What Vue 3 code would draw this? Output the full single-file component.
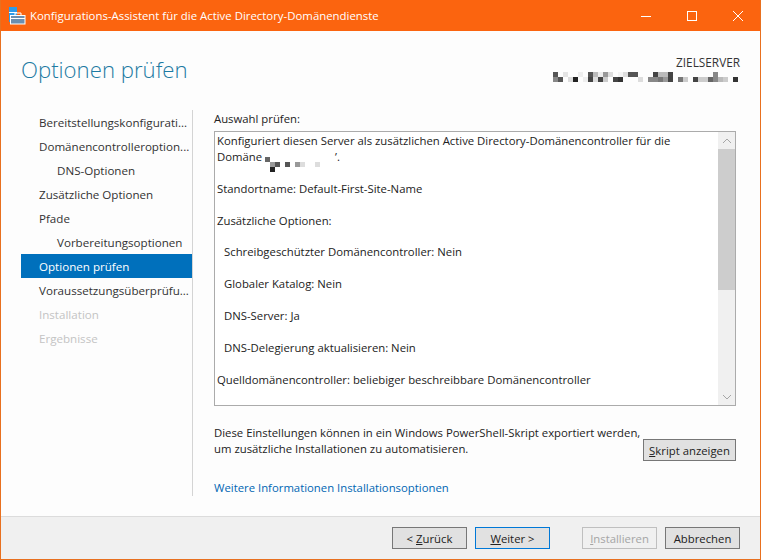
<script setup>
const navItems = [
  { label: 'Bereitstellungskonfigurati...', },
  { label: 'Domänencontrolleroption...' },
  { label: 'DNS-Optionen', sub: true },
  { label: 'Zusätzliche Optionen' },
  { label: 'Pfade' },
  { label: 'Vorbereitungsoptionen', sub: true },
  { label: 'Optionen prüfen', active: true },
  { label: 'Voraussetzungsüberprüfu...' },
  { label: 'Installation', disabled: true },
  { label: 'Ergebnisse', disabled: true }
]
const lines = [
  { t: 'Standortname: Default-First-Site-Name' },
  { t: 'Zusätzliche Optionen:' },
  { t: 'Schreibgeschützter Domänencontroller: Nein', ind: true },
  { t: 'Globaler Katalog: Nein', ind: true },
  { t: 'DNS-Server: Ja', ind: true },
  { t: 'DNS-Delegierung aktualisieren: Nein', ind: true },
  { t: 'Quelldomänencontroller: beliebiger beschreibbare Domänencontroller' }
]
const w = 'transparent'
const top = ['#555',w,'#e4e4e4',w,w,'#eee',w,'#555','#bbb','#eee','#999','#ddd',w,'#f4f4f4','#ddd','#555','#555',w,w,w,'#444','#bbb','#bbb','#444',w,w,w,w,w,w,w,w,'#888',w,w,w,w]
const bottom = ['#888','#555',w,'#ddd','#222',w,'#eee','#444','#ddd','#444','#ccc',w,'#444','#333',w,w,w,'#ddd',w,'#888','#888','#777','#999','#444',w,'#777','#ccc',w,'#444','#ccc','#ccc','#666','#888','#bbb','#ccc',w,'#333']
const domainCells = [
  { c: 1, r: 1, bg: '#666' },
  { c: 2, r: 2, bg: '#999' },
  { c: 3, r: 2, bg: '#555' },
  { c: 2, r: 3, bg: '#222' },
  { c: 5, r: 2, bg: '#555' },
  { c: 7, r: 2, bg: '#999' },
  { c: 8, r: 2, bg: '#ddd' },
  { c: 11, r: 2, bg: '#ddd' }
]
</script>

<template>
  <div class="win">
    <header class="titlebar">
      <svg class="appicon" width="18" height="18" viewBox="0 0 18 18">
        <rect x="1" y="0" width="8" height="15" fill="#2f9be8"/>
        <rect x="1" y="5" width="8" height="1" fill="#fff"/>
        <rect x="2.5" y="8.5" width="14.5" height="8.5" fill="#6b8fb0" stroke="#fff"/>
        <path d="M7 8V6h6v2" fill="none" stroke="#fff"/>
        <rect x="3" y="11" width="14" height="1" fill="#fff"/>
      </svg>
      <span class="wintitle">Konfigurations-Assistent für die Active Directory-Domänendienste</span>
      <div class="controls">
        <svg width="10" height="10" viewBox="0 0 10 10"><path d="M0 5.5h10" stroke="#fff"/></svg>
        <svg width="10" height="10" viewBox="0 0 10 10"><rect x="0.5" y="0.5" width="9" height="9" fill="none" stroke="#fff"/></svg>
        <svg width="10" height="10" viewBox="0 0 10 10"><path d="M0 0l10 10M10 0L0 10" stroke="#fff"/></svg>
      </div>
    </header>

    <main class="client">
      <div class="headrow">
        <h1>Optionen prüfen</h1>
        <div class="target">
          <div class="tlabel">ZIELSERVER</div>
          <div class="mosaic">
            <div class="mrow"><i v-for="(c,i) in top" :key="i" :style="{background:c}"></i></div>
            <div class="mrow"><i v-for="(c,i) in bottom" :key="i" :style="{background:c}"></i></div>
          </div>
        </div>
      </div>

      <div class="content">
        <nav class="nav">
          <div v-for="n in navItems" :key="n.label" class="navitem" :class="{sub:n.sub,active:n.active,disabled:n.disabled}">{{ n.label }}</div>
        </nav>
        <section class="pane">
          <div class="plabel">Auswahl prüfen:</div>
          <div class="listbox">
            <div class="text">
              <div class="l">Konfiguriert diesen Server als zusätzlichen Active Directory-Domänencontroller für die</div>
              <div class="l">Domäne <span class="redact"><b v-for="(d,i) in domainCells" :key="i" :style="{gridColumn:d.c,gridRow:d.r,background:d.bg}"></b></span><span class="tail">’.</span></div>
              <template v-for="x in lines" :key="x.t">
                <div class="gap"></div>
                <div class="l" :class="{ind:x.ind}">{{ x.t }}</div>
              </template>
            </div>
            <div class="scroll">
              <div class="sbtn"><svg width="10" height="6" viewBox="0 0 10 6"><path d="M1 5l4-4 4 4" fill="none" stroke="#a6a6a6"/></svg></div>
              <div class="thumb"></div>
              <div class="strack"></div>
              <div class="sbtn"><svg width="10" height="6" viewBox="0 0 10 6"><path d="M1 1l4 4 4-4" fill="none" stroke="#a6a6a6"/></svg></div>
            </div>
          </div>
          <div class="exportrow">
            <div class="etext">Diese Einstellungen können in ein Windows PowerShell-Skript exportiert werden,<br>um zusätzliche Installationen zu automatisieren.</div>
            <button class="btn script"><u>S</u>kript anzeigen</button>
          </div>
          <a class="link">Weitere Informationen Installationsoptionen</a>
        </section>
      </div>
    </main>

    <footer class="footer">
      <button class="btn"><span>&lt; <u>Z</u>urück</span></button>
      <button class="btn focus"><span><u>W</u>eiter &gt;</span></button>
      <button class="btn dis"><u>I</u>nstallieren</button>
      <button class="btn">Abbrechen</button>
    </footer>
  </div>
</template>

<style>
html, body { margin: 0; background: #fff; }
</style>
<style scoped>
.win { width: 761px; height: 560px; box-sizing: border-box; border: 1px solid #e8701f; border-top: 0; display: flex; flex-direction: column; background: #fdfdfd; font-family: "Open Sans", "Noto Sans", sans-serif; font-size: 11.33px; color: #222; overflow: hidden; }
.titlebar { height: 31px; flex: none; background: #fb640f; color: #fff; display: flex; align-items: center; padding-left: 8px; margin: 0 -1px; }
.appicon { margin-right: 4px; margin-top: 1px; }
.wintitle { font-size: 11.4px; white-space: nowrap; }
.controls { margin-left: auto; display: flex; gap: 36px; margin-right: 18px; align-items: center; }
.client { flex: 1; display: flex; flex-direction: column; min-height: 0; }
.headrow { display: flex; justify-content: space-between; height: 74px; flex: none; }
h1 { margin: 21px 0 0 20px; font-size: 22.2px; line-height: 36px; font-weight: 300; color: #1e7ba3; font-family: "Open Sans", sans-serif; }
.target { margin: 22px 20px 0 0; text-align: right; }
.tlabel { font-size: 11.8px; line-height: 18px; color: #333; }
.mosaic { margin: 1px 2px 0 0; }
.mrow { display: flex; justify-content: flex-end; }
.mrow i { display: block; width: 5px; height: 5px; }
.content { flex: 1; display: flex; min-height: 0; padding-bottom: 20px; }
.nav { width: 171px; margin: 5px 0 0 20px; border-right: 1px solid #d4d4d4; flex: none; font-size: 11.6px; }
.navitem { height: 24px; line-height: 25px; padding-left: 18px; white-space: nowrap; color: #333; }
.navitem.sub { padding-left: 36px; }
.navitem.active { background: #0070bc; color: #fff; }
.navitem.disabled { color: #c4c4c4; }
.pane { flex: 1; padding: 6px 24px 0 21px; display: flex; flex-direction: column; min-width: 0; }
.plabel { line-height: 16px; height: 18px; }
.listbox { height: 275px; flex: none; border: 1px solid #ababab; background: #fff; display: flex; box-sizing: border-box; margin-top: 4px; }
.text { flex: 1; padding: 1px 2px; overflow: hidden; white-space: nowrap; }
.l { line-height: 16px; height: 16px; }
.l.ind { padding-left: 7px; }
.gap { height: 15.8px; }
.redact { display: inline-grid; grid-template-columns: repeat(11, 5px); grid-template-rows: repeat(3, 5px); vertical-align: -1px; margin-right: 15px; }
.redact b { display: block; }
.scroll { width: 17px; flex: none; display: flex; flex-direction: column; background: #f0f0f0; }
.sbtn { height: 17px; display: flex; align-items: center; justify-content: center; }
.thumb { height: 141px; background: #cdcdcd; }
.strack { flex: 1; }
.exportrow { position: relative; margin-top: 19px; height: 41px; }
.etext { line-height: 16px; white-space: nowrap; }
.btn { font: inherit; color: #222; width: 75px; height: 22px; padding: 0; background: #e1e1e1; border: 1px solid #777; box-sizing: border-box; }
.script { position: absolute; right: 0; top: 14px; width: 93px; }
.link { color: #0066b3; margin-top: 19px; line-height: 16px; }
.footer { height: 43px; flex: none; background: #f0f0f0; border-top: 1px solid #dcdcdc; display: flex; align-items: center; padding: 0 19px 0 391px; box-sizing: border-box; }
.footer .btn:nth-child(2) { margin-left: 8px; }
.footer .btn:nth-child(3) { margin-left: 32px; }
.footer .btn:nth-child(4) { margin-left: 8px; }
.focus { border-color: #0078d7; }
.dis { color: #a5a5a5; background: #f0f0f0; border-color: #bfbfbf; }
</style>
